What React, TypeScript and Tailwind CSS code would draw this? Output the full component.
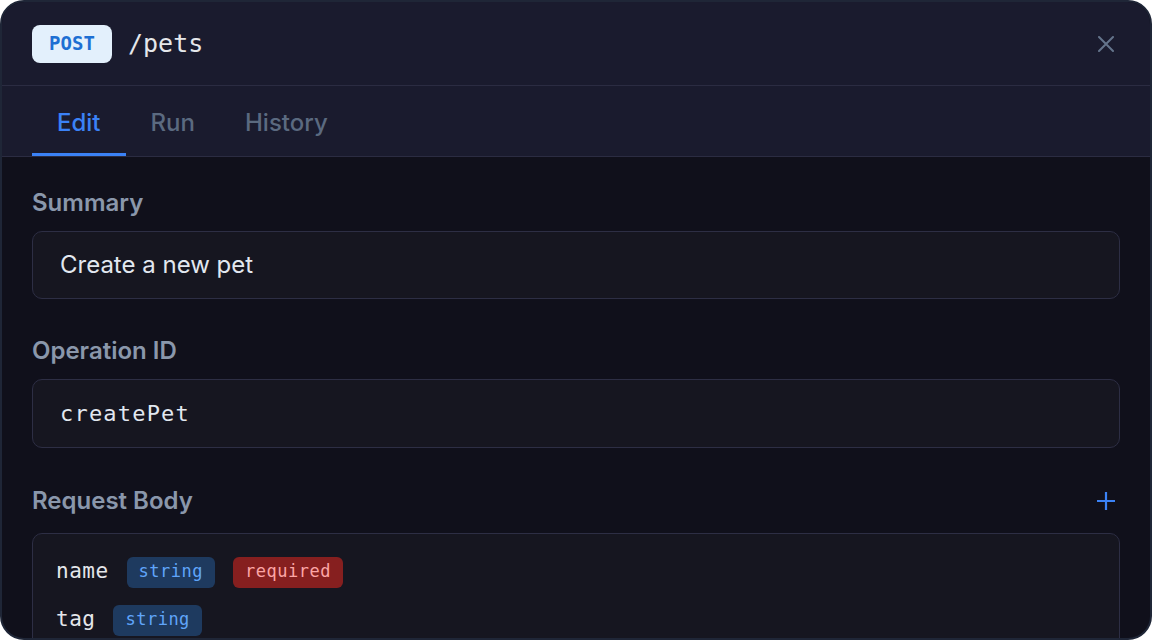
import { ReactNode } from 'react'

const mono = "font-['DejaVu_Sans_Mono','Liberation_Mono',monospace]"

function Label({ children }: { children: ReactNode }) {
  return <p className="text-[24px] font-semibold leading-[28px] text-[#8a97ab]">{children}</p>
}

function Pill({ children, tone }: { children: ReactNode; tone: 'blue' | 'red' }) {
  return (
    <span
      className={`${mono} flex h-[31px] items-center rounded-[6px] px-3 text-[17px] tracking-[0.5px] ${
        tone === 'blue' ? 'bg-[#1e3a5f] text-[#60a5fa]' : 'bg-[#861f1f] text-[#fca5a5]'
      }`}
    >
      {children}
    </span>
  )
}

export default function App() {
  return (
    <div className="h-[640px] w-[1152px] bg-white font-['Inter',sans-serif]">
      <div className="flex h-full w-full flex-col overflow-hidden rounded-[24px] border-2 border-[#1f2637] bg-[#10101b]">
        {/* Header */}
        <div className="flex h-[84px] shrink-0 items-center justify-between border-b border-[#2b2c42] bg-[#1a1b2e] pl-[30px] pr-[36px]">
          <div className="flex items-center gap-4">
            <span className={`${mono} flex h-[38px] w-[80px] items-center justify-center rounded-[8px] bg-[#e3f0fc] text-[19px] font-bold text-[#1d6fd3]`}>
              POST
            </span>
            <span className={`${mono} text-[25px] text-[#e5e7eb]`}>/pets</span>
          </div>
          <svg width="16" height="16" viewBox="0 0 16 16" className="text-[#64748b]">
            <path d="M1 1L15 15M15 1L1 15" stroke="currentColor" strokeWidth="2" strokeLinecap="round" />
          </svg>
        </div>

        {/* Tabs */}
        <div className="flex h-[71px] shrink-0 border-b border-[#2b2c42] bg-[#1a1b2e] px-[30px]">
          <button className="flex h-[70px] items-center border-b-[3px] border-[#3b82f6] px-[25px] pt-[6px] text-[24px] font-medium text-[#3b82f6]">
            Edit
          </button>
          <button className="flex h-[70px] items-center px-[25px] pt-[3px] text-[24px] font-medium text-[#5b6a80]">Run</button>
          <button className="flex h-[70px] items-center px-[25px] pt-[3px] text-[24px] font-medium text-[#5b6a80]">History</button>
        </div>

        {/* Body */}
        <div className="flex flex-col px-[30px] pt-[32px]">
          <Label>Summary</Label>
          <div className="mt-[14px] flex h-[68px] items-center rounded-[10px] border border-[#2d2e44] bg-[#161620] px-[27px] text-[24px] text-[#e2e8f0]">
            Create a new pet
          </div>

          <div className="mt-[38px]">
            <Label>Operation ID</Label>
          </div>
          <div className={`${mono} mt-[14px] flex h-[69px] items-center rounded-[10px] border border-[#2d2e44] bg-[#161620] px-[27px] text-[22px] tracking-[1.2px] text-[#e2e8f0]`}>
            createPet
          </div>

          <div className="mt-[39px] flex items-center justify-between">
            <Label>Request Body</Label>
            <svg width="20" height="20" viewBox="0 0 20 20" className="mr-[4px] text-[#3b82f6]">
              <path d="M10 1V19M1 10H19" stroke="currentColor" strokeWidth="2.2" />
            </svg>
          </div>

          <div className="mt-[18px] flex flex-col gap-4 rounded-[10px] border border-[#2d2e44] bg-[#161620] px-[23px] pb-6 pt-[22px]">
            <div className="flex h-[32px] items-center gap-[18px]">
              <span className={`${mono} text-[21px] tracking-[0.5px] text-[#e5e7eb]`}>name</span>
              <Pill tone="blue">string</Pill>
              <Pill tone="red">required</Pill>
            </div>
            <div className="flex h-[32px] items-center gap-[18px]">
              <span className={`${mono} text-[21px] tracking-[0.5px] text-[#e5e7eb]`}>tag</span>
              <Pill tone="blue">string</Pill>
            </div>
          </div>
        </div>
      </div>
    </div>
  )
}
